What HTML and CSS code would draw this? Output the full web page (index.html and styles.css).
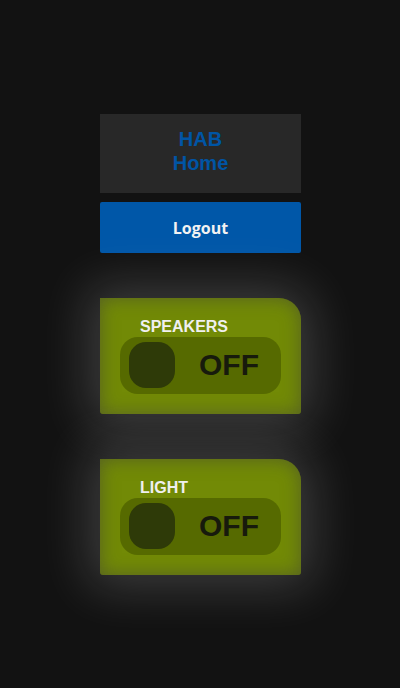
FILE: index.html
```html
<!DOCTYPE html>
<html>
<head>
<meta charset="utf-8">
<link rel="stylesheet" href="styles.css">
</head>
<body>
<main class="page">
  <div class="header"><span>HAB<br>Home</span></div>
  <button class="logout">Logout</button>
  <section class="card">
    <div class="label">SPEAKERS</div>
    <div class="track"><div class="knob"></div><div class="state">OFF</div></div>
  </section>
  <section class="card">
    <div class="label">LIGHT</div>
    <div class="track"><div class="knob"></div><div class="state">OFF</div></div>
  </section>
</main>
</body>
</html>
```
FILE: styles.css
```css
html, body { margin: 0; padding: 0; background: #121212; height: 100%; }
.page {
  width: 201px;
  margin: 0 auto;
  padding-top: 114px;
  padding-left: 1px;
  display: flex;
  flex-direction: column;
}
.header {
  height: 79px;
  box-sizing: border-box;
  padding-bottom: 6px;
  background: #282828;
  display: flex;
  align-items: center;
  justify-content: center;
  text-align: center;
  font-family: "Liberation Sans", Arial, sans-serif;
  font-weight: bold;
  font-size: 20px;
  line-height: 24px;
  color: #0055a5;
}
.logout {
  margin-top: 9px;
  height: 51px;
  border: none;
  border-radius: 2px;
  background: #0057a8;
  color: #f2f2f2;
  font-family: "Open Sans", sans-serif;
  font-weight: bold;
  font-size: 16px;
  padding: 0;
}
.card {
  margin-top: 45px;
  height: 116px;
  box-sizing: border-box;
  padding: 20px 20px 0 20px;
  background: #728a06;
  border-radius: 0 22px 3px 3px;
  box-shadow: inset 0 0 18px rgba(60, 60, 60, 0.55), 0 0 50px 12px rgba(255, 255, 255, 0.18);
}
.label {
  font-family: "Liberation Sans", Arial, sans-serif;
  font-weight: bold;
  font-size: 16px;
  line-height: 18px;
  color: #f0f0f0;
  padding-left: 20px;
  height: 19px;
}
.track {
  height: 57px;
  box-sizing: border-box;
  padding: 5px 22px 6px 9px;
  background: #566a00;
  border-radius: 18px;
  display: flex;
  align-items: center;
  justify-content: space-between;
}
.knob {
  width: 46px;
  height: 46px;
  border-radius: 17px;
  background: #2e3a08;
}
.state {
  font-family: "Liberation Sans", Arial, sans-serif;
  font-weight: bold;
  font-size: 30px;
  color: #171a0c;
}
```
